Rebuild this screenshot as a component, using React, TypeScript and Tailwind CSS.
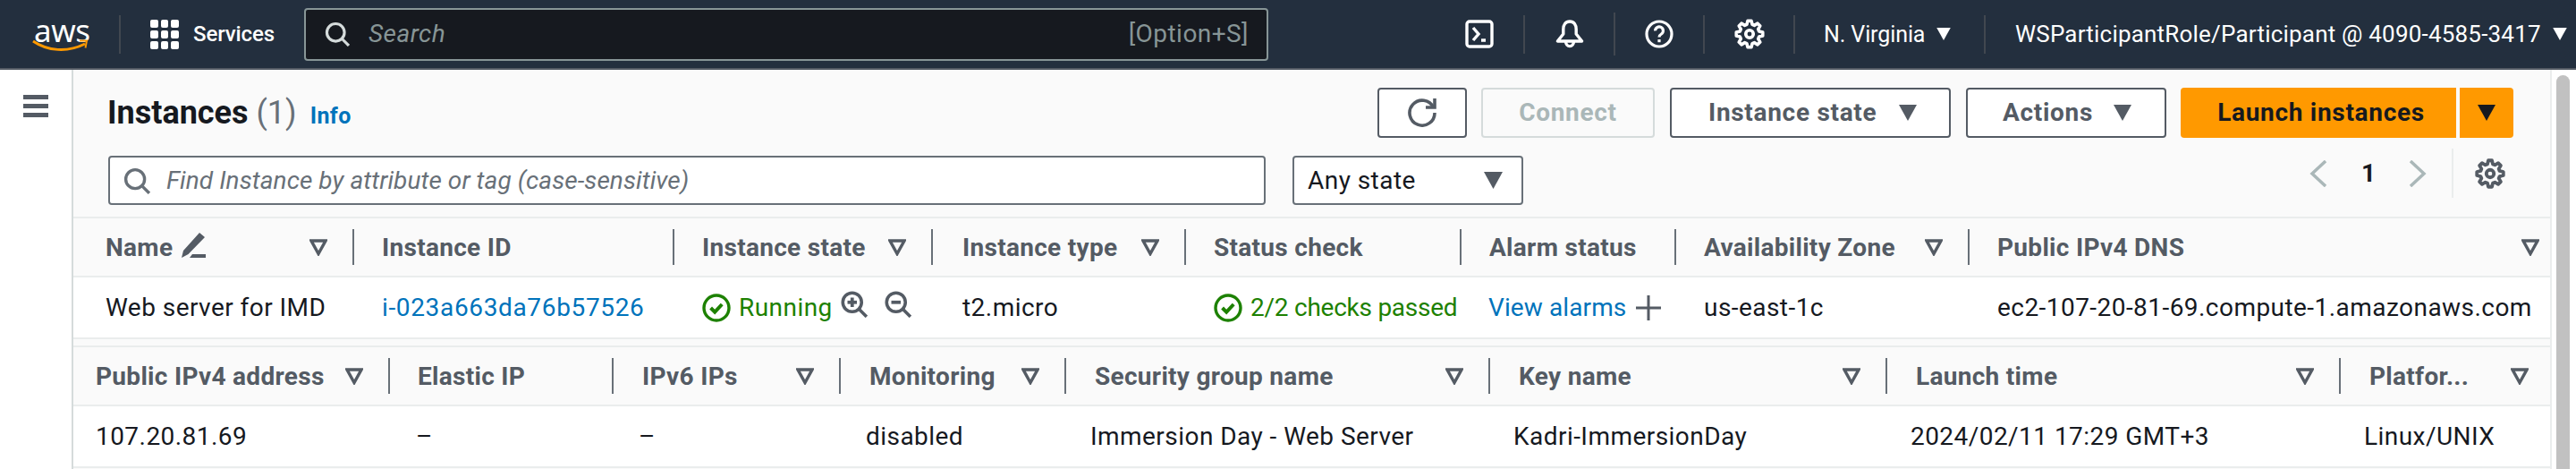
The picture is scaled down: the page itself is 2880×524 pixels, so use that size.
import React from "react";

const FONT = "[font-family:Roboto,'Liberation_Sans',sans-serif]";

function gearPath() {
  const pts: string[] = [];
  const teeth = 8;
  for (let i = 0; i < teeth; i++) {
    const a = (i / teeth) * Math.PI * 2 - Math.PI / 2;
    const step = (Math.PI * 2) / teeth;
    const list: [number, number][] = [
      [5.2, a - step * 0.36],
      [7, a - step * 0.17],
      [7, a + step * 0.17],
      [5.2, a + step * 0.36],
    ];
    list.forEach(([r, t]) => pts.push(`${(8 + r * Math.cos(t)).toFixed(2)} ${(8 + r * Math.sin(t)).toFixed(2)}`));
  }
  return "M" + pts.join("L") + "Z";
}

const Gear = ({ className, sw = 1.7 }: { className: string; sw?: number }) => (
  <svg viewBox="0 0 16 16" className={className} fill="none" stroke="currentColor" strokeWidth={sw} strokeLinejoin="round">
    <path d={gearPath()} />
    <circle cx="8" cy="8" r="2" />
  </svg>
);

const Caret = ({ className }: { className: string }) => (
  <svg viewBox="0 0 20 18" className={className} fill="currentColor">
    <path d="M0 0h20L10 18z" />
  </svg>
);

const SortCaret = ({ className = "" }: { className?: string }) => (
  <svg viewBox="0 0 20 20" className={`w-[20px] h-[20px] text-[#545b64] shrink-0 ${className}`} fill="none" stroke="currentColor" strokeWidth="3.4">
    <path d="M2 3h16L10 17.5z" />
  </svg>
);

const Search = ({ className }: { className: string }) => (
  <svg viewBox="0 0 16 16" className={className} fill="none" stroke="currentColor" strokeWidth="1.8">
    <circle cx="7" cy="7" r="5.6" />
    <path d="M11 11l4.4 4.4" />
  </svg>
);

const StatusOk = ({ className = "" }: { className?: string }) => (
  <svg viewBox="0 0 16 16" className={`w-[32px] h-[32px] shrink-0 ${className}`} fill="none" stroke="#1d8102" strokeWidth="1.7">
    <circle cx="8" cy="8" r="7" />
    <path d="M4.8 8l2.3 2.3 4-4.300" strokeWidth="2" />
  </svg>
);

const ZoomIcon = ({ plus, className = "" }: { plus?: boolean; className?: string }) => (
  <svg viewBox="0 0 16 16" className={`w-[30px] h-[30px] text-[#545b64] shrink-0 ${className}`} fill="none" stroke="currentColor" strokeWidth="1.9">
    <circle cx="6.8" cy="6.8" r="5.6" />
    <path d="M10.8 10.8l4.6 4.6" />
    <path d="M4 6.8h5.600" strokeWidth="2" />
    {plus && <path d="M6.8 4v5.600" strokeWidth="2" />}
  </svg>
);

const NavDivider = ({ className }: { className: string }) => <div className={`w-[2px] bg-[#414750] shrink-0 ${className}`} />;

const HeaderCell = ({ w, pl, label, sort, last, pr }: { w: string; pl: string; label: string; sort?: boolean; last?: boolean; pr?: string }) => (
  <div className={`flex items-center h-full shrink-0 ${w}`}>
    <div className={`flex items-center flex-1 min-w-0 ${pl} ${pr ?? "pr-[28px]"}`}>
      <span className="mt-[2px] font-bold tracking-[0.3px] text-[#545b64] whitespace-nowrap">{label}</span>
      {label === "Name" && (
        <svg viewBox="0 0 28 28" className="w-[28px] h-[28px] ml-[10px] -mt-[4px] text-[#545b64]" fill="currentColor">
          <path d="M20 0l6 5L7.5 24 0 28l2-8zM12 24h15v4H9z" />
        </svg>
      )}
      {sort && <SortCaret className="ml-auto" />}
    </div>
    {!last && <div className="w-[2px] h-[40px] bg-[#687078] shrink-0" />}
  </div>
);

const Cell = ({ w, pl, children, className = "" }: { w: string; pl: string; children: React.ReactNode; className?: string }) => (
  <div className={`flex items-center h-full shrink-0 overflow-hidden whitespace-nowrap ${w} ${pl} ${className}`}>{children}</div>
);

const Hr = () => <div className="h-[2px] bg-[#eaeded]" />;

export default function App() {
  return (
    <div className={`w-[2880px] h-[524px] overflow-hidden bg-white text-[28px] leading-none tracking-[0.45px] text-[#16191f] ${FONT}`}>
      <header className="flex items-center h-[78px] bg-[#232f3e] border-b-2 border-[#545b64] pl-[36px] text-white">
        <div className="relative w-[63px] h-[38px] shrink-0">
          <span className="absolute left-[2px] -top-[5px] text-[35px] leading-[40px] tracking-[-0.5px] [font-family:'Noto_Sans',sans-serif]">aws</span>
          <svg viewBox="0 0 63 16" className="absolute left-0 top-[25px] w-[63px] h-[16px]" fill="none" stroke="#ff9900">
            <path d="M1 2c16 11 38 13 58 3" strokeWidth="3" />
            <path d="M53 1.5l8 0-1.5 8" strokeWidth="2" />
          </svg>
        </div>
        <NavDivider className="ml-[34px] h-[43px]" />
        <div className="grid grid-cols-3 gap-[3px] ml-[33px] w-[32px] shrink-0">
          {[0, 1, 2, 3, 4, 5, 6, 7, 8].map((i) => (
            <div key={i} className="h-[9px] bg-white rounded-[2px]" />
          ))}
        </div>
        <span className="ml-[16px] w-[89px] shrink-0 text-[24px] font-medium tracking-[-0.1px]">Services</span>
        <div className="flex items-center ml-[35px] w-[1078px] h-[59px] shrink-0 bg-[#16191f] border-2 border-[#879596] rounded-[4px] pl-[21px] pr-[20px] text-[#879596]">
          <Search className="w-[28px] h-[28px] text-[#d5dbdb]" />
          <span className="ml-[21px] italic">Search</span>
          <span className="ml-auto">[Option+S]</span>
        </div>
        <svg viewBox="0 0 16 16" className="ml-[220px] w-[32px] h-[32px] shrink-0" fill="none" stroke="white" strokeWidth="1.7">
          <rect x="1" y="1" width="14" height="14" rx="1.5" />
          <path d="M4.500 4.500L7.500 8l-3 3.500M9 11.500h2.500" />
        </svg>
        <NavDivider className="ml-[33px] h-[43px]" />
        <svg viewBox="0 0 16 16" className="ml-[34px] w-[32px] h-[32px] shrink-0" fill="none" stroke="white" strokeWidth="1.7" strokeLinejoin="round">
          <path d="M8 1C5.600 1 4.400 3 4.400 5.400V8L1.200 12h13.600l-3.200-4V5.400C11.600 3 10.400 1 8 1z" />
          <path d="M5.800 12.400a2.200 2.400 0 0 0 4.400 0" />
        </svg>
        <NavDivider className="ml-[33px] h-[48px]" />
        <svg viewBox="0 0 16 16" className="ml-[33px] w-[32px] h-[32px] shrink-0" fill="none" stroke="white" strokeWidth="1.6">
          <circle cx="8" cy="8" r="7" />
          <path d="M5.800 6.200a2.200 2.200 0 1 1 3.400 1.800c-.8.500-1.200 1-1.200 1.800" />
          <path d="M8 11v1.600" />
        </svg>
        <NavDivider className="ml-[33px] h-[43px]" />
        <Gear className="ml-[33px] w-[34px] h-[34px] shrink-0 text-white" />
        <NavDivider className="ml-[32px] h-[43px]" />
        <span className="ml-[32px] w-[112px] shrink-0 text-[25px] tracking-[-0.1px] whitespace-nowrap">N. Virginia</span>
        <Caret className="ml-[14px] w-[16px] h-[14px] shrink-0" />
        <NavDivider className="ml-[37px] h-[43px]" />
        <span className="ml-[33px] text-[26px] tracking-[0.2px] whitespace-nowrap">WSParticipantRole/Participant @ 4090-4585-3417</span>
        <Caret className="ml-[13px] w-[16px] h-[14px] shrink-0" />
      </header>

      <div className="flex h-[446px]">
        <aside className="w-[82px] shrink-0 border-r-2 border-[#d5dbdb] pt-[28px] pl-[26px]">
          <div className="flex flex-col gap-[5px] w-[28px]">
            <div className="h-[5px] bg-[#545b64]" />
            <div className="h-[5px] bg-[#545b64]" />
            <div className="h-[5px] bg-[#545b64]" />
          </div>
        </aside>

        <main className="w-[2771px] shrink-0 bg-[#fafafa] border-r-2 border-[#eaeded] flex flex-col">
          <div className="flex items-center h-[56px] mt-[20px] pl-[38px] pr-[41px]">
            <h1 className="font-bold text-[36px] tracking-normal whitespace-nowrap">Instances</h1>
            <span className="ml-[9px] text-[36px] tracking-normal text-[#687078]">(1)</span>
            <a className="ml-[15px] mt-[6px] font-bold text-[#0073bb] text-[25px]">Info</a>
            <button className="ml-auto flex items-center justify-center w-[100px] h-[56px] bg-white border-2 border-[#545b64] rounded-[4px] text-[#545b64]">
              <svg viewBox="0 0 16 16" className="w-[32px] h-[32px]" fill="none" stroke="currentColor" strokeWidth="1.8">
                <path d="M10 5h5V0" />
                <path d="M15 8a7 7 0 1 1-.7-3" />
              </svg>
            </button>
            <button className="ml-[16px] w-[194px] h-[56px] bg-[#fafafa] border-2 border-[#d5dbdb] rounded-[4px] font-bold tracking-[0.7px] text-[#aab7b8]">Connect</button>
            <button className="ml-[17px] flex items-center pl-[41px] w-[314px] h-[56px] bg-white border-2 border-[#545b64] rounded-[4px] font-bold tracking-[0.7px] text-[#545b64]">
              Instance state
              <Caret className="ml-[25px] w-[20px] h-[18px]" />
            </button>
            <button className="ml-[17px] flex items-center pl-[39px] w-[224px] h-[56px] bg-white border-2 border-[#545b64] rounded-[4px] font-bold tracking-[0.7px] text-[#545b64]">
              Actions
              <Caret className="ml-[23px] w-[20px] h-[18px]" />
            </button>
            <button className="ml-[16px] pl-[6px] w-[308px] h-[56px] bg-[#ff9900] rounded-l-[4px] font-bold tracking-[0.7px] text-[#16191f]">Launch instances</button>
            <button className="ml-[4px] flex items-center justify-center w-[60px] h-[56px] bg-[#ff9900] rounded-r-[4px] text-[#16191f]">
              <Caret className="w-[20px] h-[18px]" />
            </button>
          </div>

          <div className="flex h-[55px] mt-[20px] pl-[39px] pr-[50px]">
            <div className="flex items-center w-[1294px] h-full bg-white border-2 border-[#687078] rounded-[4px] pl-[15px] text-[#687078]">
              <Search className="w-[30px] h-[30px] text-[#687078]" />
              <span className="ml-[18px] mt-[1px] italic tracking-[0.07px]">Find Instance by attribute or tag (case-sensitive)</span>
            </div>
            <div className="flex items-center ml-[30px] w-[258px] h-full bg-white border-2 border-[#687078] rounded-[4px] pl-[15px]">
              <span className="mt-[1px]">Any state</span>
              <Caret className="ml-auto mr-[21px] w-[21px] h-[19px] text-[#545b64]" />
            </div>
            <div className="flex items-center ml-auto -mt-[8px] h-[55px]">
              <svg viewBox="0 0 20 30" className="w-[20px] h-[30px] text-[#aab7b8]" fill="none" stroke="currentColor" strokeWidth="3.500">
                <path d="M18 1L3 15l15 14" />
              </svg>
              <span className="ml-[38px] w-[14px] text-center font-bold">1</span>
              <svg viewBox="0 0 20 30" className="ml-[39px] w-[20px] h-[30px] text-[#aab7b8]" fill="none" stroke="currentColor" strokeWidth="3.500">
                <path d="M2 1l15 14L2 29" />
              </svg>
              <div className="ml-[28px] w-[2px] h-[55px] bg-[#eaeded]" />
              <Gear className="ml-[24px] w-[34px] h-[34px] text-[#545b64]" sw={1.8} />
            </div>
          </div>

          <div className="mt-[13px]">
            <Hr />
            <div className="flex h-[64px] items-center">
              <HeaderCell w="w-[314px]" pl="pl-[36px]" label="Name" sort />
              <HeaderCell w="w-[358px]" pl="pl-[31px]" label="Instance ID" />
              <HeaderCell w="w-[289px]" pl="pl-[31px]" label="Instance state" sort />
              <HeaderCell w="w-[283px]" pl="pl-[33px]" label="Instance type" sort />
              <HeaderCell w="w-[308px]" pl="pl-[31px]" label="Status check" />
              <HeaderCell w="w-[240px]" pl="pl-[31px]" label="Alarm status" />
              <HeaderCell w="w-[328px]" pl="pl-[31px]" label="Availability Zone" sort />
              <HeaderCell w="w-[649px]" pl="pl-[31px]" label="Public IPv4 DNS" sort last pr="pr-[12px]" />
            </div>
            <Hr />
            <div className="flex h-[67px] bg-white items-center">
              <Cell w="w-[314px]" pl="pl-[36px]">Web server for IMD</Cell>
              <Cell w="w-[358px]" pl="pl-[31px]" className="tracking-[0.65px] text-[#0073bb]">i-023a663da76b57526</Cell>
              <Cell w="w-[289px]" pl="pl-[31px]">
                <StatusOk />
                <span className="ml-[9px] text-[#1d8102]">Running</span>
                <ZoomIcon plus className="ml-[9px] -mt-[8px]" />
                <ZoomIcon className="ml-[19px] -mt-[8px]" />
              </Cell>
              <Cell w="w-[283px]" pl="pl-[33px]">t2.micro</Cell>
              <Cell w="w-[306px]" pl="pl-[31px]" className="mr-[2px]">
                <StatusOk />
                <span className="ml-[9px] tracking-[-0.25px] text-[#1d8102]">2/2 checks passed</span>
              </Cell>
              <Cell w="w-[240px]" pl="pl-[30px]">
                <span className="tracking-[0.1px] text-[#0073bb]">View alarms</span>
                <svg viewBox="0 0 28 28" className="ml-[11px] w-[28px] h-[28px] text-[#545b64] shrink-0" fill="none" stroke="currentColor" strokeWidth="3">
                  <path d="M14 0v28M0 14h28" />
                </svg>
              </Cell>
              <Cell w="w-[328px]" pl="pl-[31px]">us-east-1c</Cell>
              <Cell w="w-[649px]" pl="pl-[31px]">ec2-107-20-81-69.compute-1.amazonaws.com</Cell>
            </div>
            <Hr />
            <div className="h-[7px]" />
            <Hr />
            <div className="flex h-[64px] items-center">
              <HeaderCell w="w-[354px]" pl="pl-[25px]" label="Public IPv4 address" sort />
              <HeaderCell w="w-[250px]" pl="pl-[31px]" label="Elastic IP" />
              <HeaderCell w="w-[254px]" pl="pl-[32px]" label="IPv6 IPs" sort />
              <HeaderCell w="w-[252px]" pl="pl-[32px]" label="Monitoring" sort />
              <HeaderCell w="w-[474px]" pl="pl-[32px]" label="Security group name" sort />
              <HeaderCell w="w-[444px]" pl="pl-[32px]" label="Key name" sort />
              <HeaderCell w="w-[507px]" pl="pl-[32px]" label="Launch time" sort />
              <HeaderCell w="w-[234px]" pl="pl-[32px]" label="Platfor..." sort last pr="pr-[24px]" />
            </div>
            <Hr />
            <div className="flex h-[67px] bg-white items-center">
              <Cell w="w-[354px]" pl="pl-[25px]">107.20.81.69</Cell>
              <Cell w="w-[250px]" pl="pl-[29px]">–</Cell>
              <Cell w="w-[254px]" pl="pl-[28px]">–</Cell>
              <Cell w="w-[252px]" pl="pl-[28px]">disabled</Cell>
              <Cell w="w-[474px]" pl="pl-[27px]">Immersion Day - Web Server</Cell>
              <Cell w="w-[444px]" pl="pl-[26px]">Kadri-ImmersionDay</Cell>
              <Cell w="w-[507px]" pl="pl-[26px]">2024/02/11 17:29 GMT+3</Cell>
              <Cell w="w-[234px]" pl="pl-[26px]">Linux/UNIX</Cell>
            </div>
            <Hr />
          </div>
        </main>

        <div className="w-[27px] shrink-0 pl-[5px] pt-[6px]">
          <div className="w-[15px] h-[600px] bg-[#c1c1c1] rounded-full" />
        </div>
      </div>
    </div>
  );
}
